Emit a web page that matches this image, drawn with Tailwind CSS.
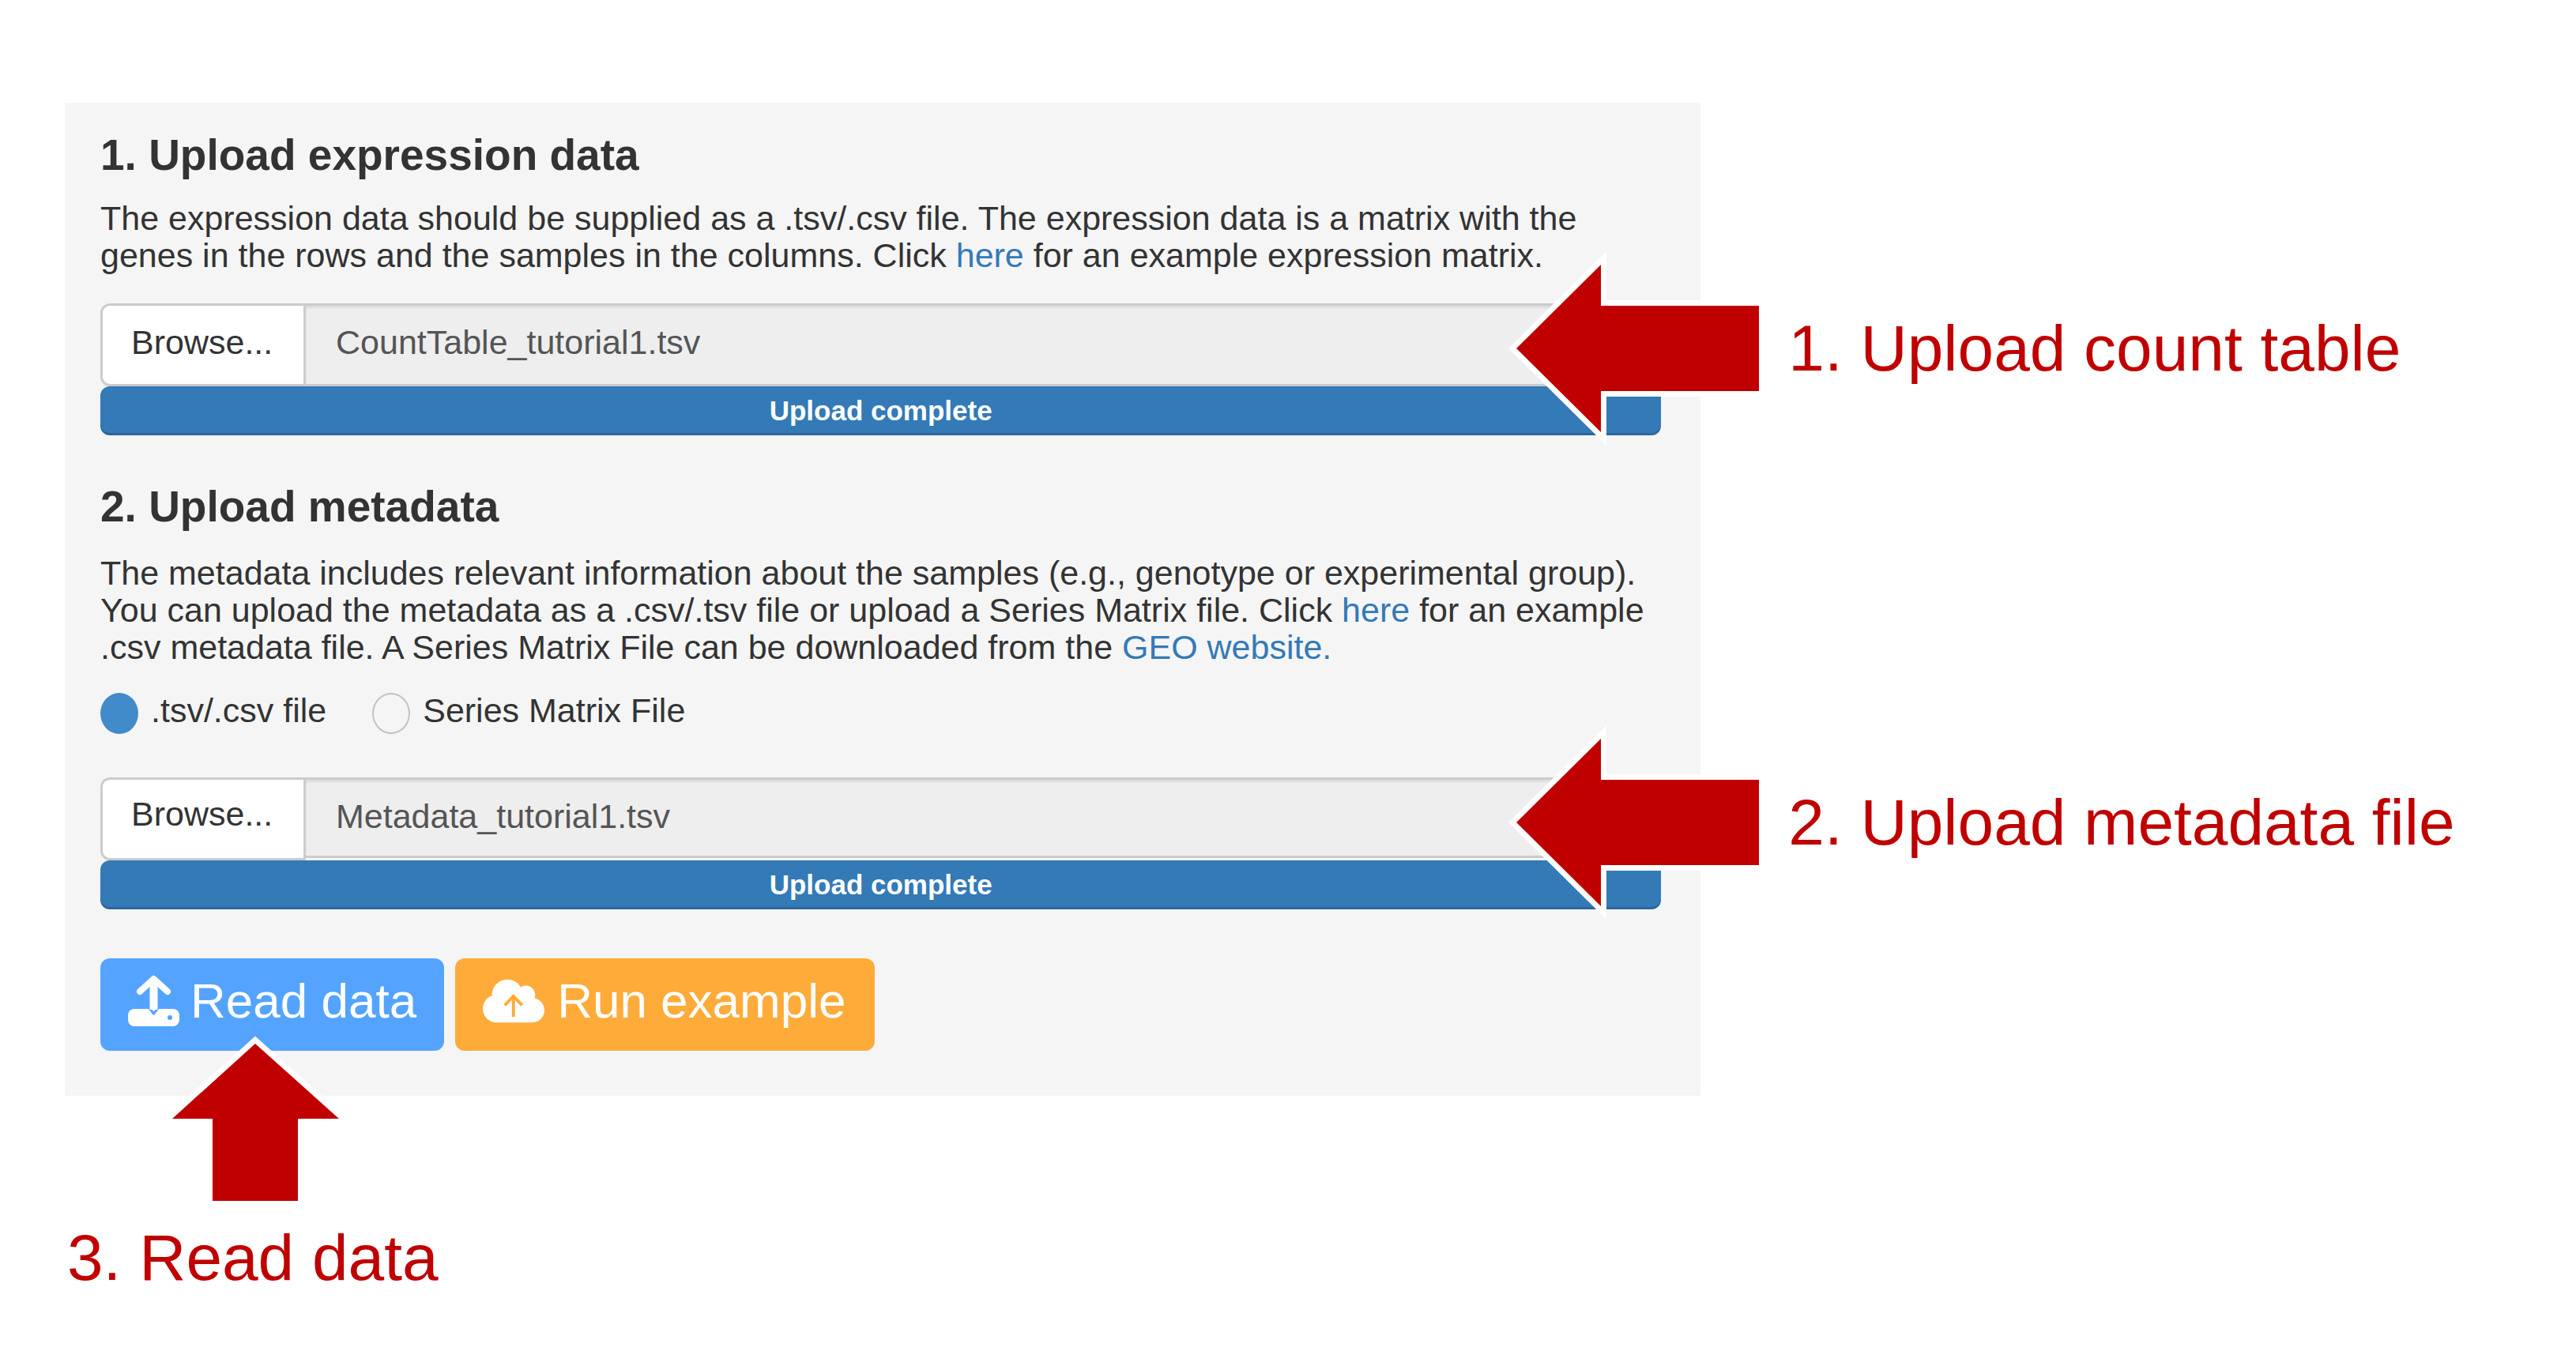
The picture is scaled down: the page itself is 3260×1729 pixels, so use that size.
<!DOCTYPE html>
<html lang="en">
<head>
<meta charset="utf-8">
<meta name="viewport" content="width=device-width, initial-scale=1">
<title>Upload data</title>
<script src="https://cdn.jsdelivr.net/npm/@tailwindcss/browser@4"></script>
</head>
<body class="overflow-x-hidden bg-white font-['Liberation_Sans',Arial,sans-serif] text-[43px] leading-[47px] text-[#333]">
<main class="px-[82px] pt-[130px] pb-20">
  <form class="w-[calc(67%-4px)] bg-[#f5f5f5] pt-9 pr-[50px] pb-[57px] pl-[45px]">

    <section>
      <h2 class="text-[55px] leading-[60px] font-bold">1. Upload expression data</h2>
      <p class="mt-[27px]">The expression data should be supplied as a .tsv/.csv file. The expression data is a matrix with the genes in the rows and the samples in the columns. Click <a href="#" class="text-[#337ab7]">here</a> for an example expression matrix.</p>

      <div class="relative mt-[37px]">
        <div class="flex h-[105px]">
          <label class="w-[260px] shrink-0 rounded-l-[12px] border-3 border-[#ccc] bg-white pl-[36px] leading-[92px]">Browse...<input type="file" class="sr-only"></label>
          <input type="text" readonly value="CountTable_tutorial1.tsv" aria-label="Expression file" class="min-w-0 flex-1 rounded-r-[12px] border-y-3 border-r-3 border-[#ccc] bg-[#eee] pb-[6px] pl-[38px] text-[#555] shadow-[inset_0_3px_3px_rgba(0,0,0,0.075)]">
        </div>
        <div role="progressbar" aria-valuenow="100" aria-valuemin="0" aria-valuemax="100" class="h-[62px] rounded-[12px] bg-[#337ab7] text-center text-[35px] leading-[62px] font-bold text-white shadow-[inset_0_-3px_0_rgba(0,0,0,0.15)]">Upload complete</div>
        <div class="absolute -top-[71px] left-[calc(100%-197px)] flex items-center gap-[37px]">
          <svg class="h-[256px] w-[321px] shrink-0" viewBox="0 0 321 256" aria-hidden="true">
            <path d="M14 128L121 22V74H321V182H121V234Z" fill="#c00000" stroke="#fff" stroke-width="14" stroke-miterlimit="10" paint-order="stroke"/>
          </svg>
          <p class="text-[82px] leading-[94px] whitespace-nowrap text-[#c00000]">1. Upload count table</p>
        </div>
      </div>
    </section>

    <section class="mt-[60px]">
      <h2 class="text-[55px] leading-[60px] font-bold">2. Upload metadata</h2>
      <p class="mt-[31px]">The metadata includes relevant information about the samples (e.g., genotype or experimental group). You can upload the metadata as a .csv/.tsv file or upload a Series Matrix file. Click <a href="#" class="text-[#337ab7]">here</a> for an example .csv metadata file. A Series Matrix File can be downloaded from the <a href="#" class="text-[#337ab7]">GEO website.</a></p>

      <div class="mt-[34px] flex gap-[58px] leading-[44px]">
        <label class="flex gap-[16px]"><input type="radio" name="format" checked class="h-[52px] w-[48px] appearance-none rounded-[50%] border-2 border-[#bdc3c7] checked:border-[#428bca] checked:bg-[#428bca]">.tsv/.csv file</label>
        <label class="flex gap-[16px]"><input type="radio" name="format" class="h-[52px] w-[48px] appearance-none rounded-[50%] border-2 border-[#bdc3c7] checked:border-[#428bca] checked:bg-[#428bca]">Series Matrix File</label>
      </div>

      <div class="relative mt-[55px]">
        <div class="flex h-[105px] items-start">
          <label class="h-[105px] w-[260px] shrink-0 rounded-l-[12px] border-3 border-[#ccc] bg-white pl-[36px] leading-[86px]">Browse...<input type="file" class="sr-only"></label>
          <input type="text" readonly value="Metadata_tutorial1.tsv" aria-label="Metadata file" class="h-[102px] min-w-0 flex-1 rounded-r-[12px] border-y-3 border-r-3 border-[#ccc] bg-[#eee] pb-[4px] pl-[38px] text-[#555] shadow-[inset_0_3px_3px_rgba(0,0,0,0.075)]">
        </div>
        <div role="progressbar" aria-valuenow="100" aria-valuemin="0" aria-valuemax="100" class="h-[62px] rounded-[12px] bg-[#337ab7] text-center text-[35px] leading-[62px] font-bold text-white shadow-[inset_0_-3px_0_rgba(0,0,0,0.15)]">Upload complete</div>
        <div class="absolute -top-[71px] left-[calc(100%-197px)] flex items-center gap-[37px]">
          <svg class="h-[256px] w-[321px] shrink-0" viewBox="0 0 321 256" aria-hidden="true">
            <path d="M14 128L121 22V74H321V182H121V234Z" fill="#c00000" stroke="#fff" stroke-width="14" stroke-miterlimit="10" paint-order="stroke"/>
          </svg>
          <p class="text-[82px] leading-[94px] whitespace-nowrap text-[#c00000]">2. Upload metadata file</p>
        </div>
      </div>
    </section>

    <div class="relative mt-[62px] flex gap-[14px] text-[62px] text-white">
      <button type="button" class="flex h-[117px] items-center gap-[14px] rounded-[12px] bg-[#54a4ff] px-[35px] pb-[10px]">
        <svg class="h-[65px] w-[65px] shrink-0" viewBox="0 0 65 65" aria-hidden="true">
          <rect y="43" width="65" height="22" rx="8" fill="#fff"/>
          <path d="M27 42L32.500 49L38 42" fill="none" stroke="#54a4ff" stroke-width="3"/>
          <path d="M32.500 6V44" fill="none" stroke="#fff" stroke-width="10"/>
          <path d="M15 21L32.500 5L50 21" fill="none" stroke="#fff" stroke-width="8" stroke-linecap="round" stroke-linejoin="round"/>
          <circle cx="53" cy="54" r="3" fill="#54a4ff"/>
        </svg>
        Read data
      </button>
      <button type="button" class="flex h-[117px] items-center gap-[16px] rounded-[12px] bg-[#ffab3a] pr-[37px] pb-[10px] pl-[35px]">
        <svg class="h-[56px] w-[78px] shrink-0" viewBox="0 30 640 452" aria-hidden="true">
          <path fill="#fff" d="M0 336c0 79.500 64.500 144 144 144h368c70.700 0 128-57.300 128-128c0-61.900-44-113.600-102.400-125.400c4.100-10.700 6.400-22.400 6.400-34.600c0-53-43-96-96-96c-19.700 0-38.100 6-53.300 16.200C367 64.200 315.300 32 256 32C167.600 32 96 103.600 96 192c0 2.700.1 5.400.2 8.100C40.200 219.800 0 273.200 0 336z"/>
          <path fill="none" stroke="#ffab3a" stroke-width="32" d="M318 420V205M228 300L318 206L408 300"/>
        </svg>
        Run example
      </button>
      <svg class="absolute top-[92px] left-[86px] h-[220px] w-[221px]" viewBox="0 0 221 220" aria-hidden="true">
        <path d="M110 16L216 111H164V215H56V111H5Z" fill="#c00000" stroke="#fff" stroke-width="14" stroke-miterlimit="10" paint-order="stroke"/>
      </svg>
    </div>
  </form>
  <p class="mt-[158px] pl-[3px] text-[82px] leading-[94px] text-[#c00000]">3. Read data</p>
</main>
</body>
</html>
